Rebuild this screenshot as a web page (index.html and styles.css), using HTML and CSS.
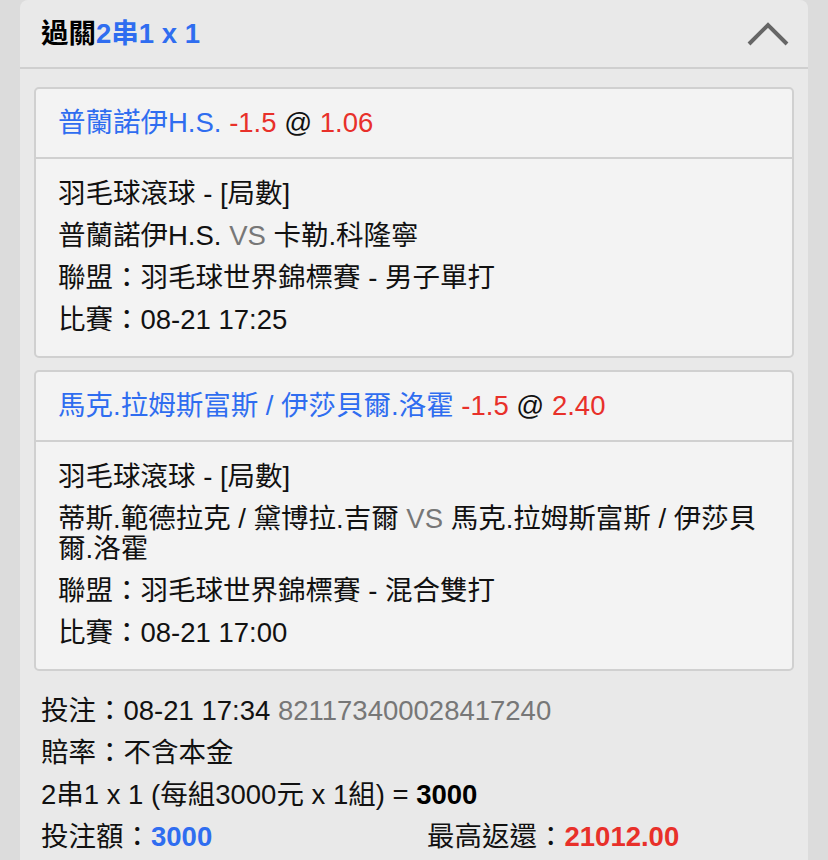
FILE: index.html
```html
<!DOCTYPE html>
<html lang="zh-TW">
<head>
    <meta charset="UTF-8">
    <meta name="viewport" content="width=device-width, initial-scale=1.0">
    <title>過關注單</title>
    <link rel="stylesheet" href="styles.css">
</head>
<body>
    <div class="panel">
        <div class="panel-head">
            <div class="title">過關<span class="blue">2串1 x 1</span></div>
            <svg class="chevron" width="44" height="26" viewBox="0 0 44 26">
                <polyline points="3,23 22,4 41,23" fill="none" stroke="#666" stroke-width="4"/>
            </svg>
        </div>

        <div class="panel-body">
            <div class="card">
                <div class="card-head row">
                    <span class="blue">普蘭諾伊H.S.</span> <span class="red">-1.5</span> @ <span class="red">1.06</span>
                </div>
                <div class="card-body">
                    <div class="row">羽毛球滾球 - [局數]</div>
                    <div class="row">普蘭諾伊H.S. <span class="gray">VS</span> 卡勒.科隆寧</div>
                    <div class="row">聯盟：羽毛球世界錦標賽 - 男子單打</div>
                    <div class="row">比賽：08-21 17:25</div>
                </div>
            </div>

            <div class="card">
                <div class="card-head row">
                    <span class="blue">馬克.拉姆斯富斯 / 伊莎貝爾.洛霍</span> <span class="red">-1.5</span> @ <span class="red">2.40</span>
                </div>
                <div class="card-body">
                    <div class="row">羽毛球滾球 - [局數]</div>
                    <div class="row">蒂斯.範德拉克 / 黛博拉.吉爾 <span class="gray">VS</span> 馬克.拉姆斯富斯 / 伊莎貝爾.洛霍</div>
                    <div class="row">聯盟：羽毛球世界錦標賽 - 混合雙打</div>
                    <div class="row">比賽：08-21 17:00</div>
                </div>
            </div>

            <div class="summary">
                <div class="row">投注：08-21 17:34 <span class="gray">821173400028417240</span></div>
                <div class="row">賠率：不含本金</div>
                <div class="row">2串1 x 1 (每組3000元 x 1組) = <b>3000</b></div>
                <div class="row totals">
                    <div>投注額：<b class="blue">3000</b></div>
                    <div>最高返還：<b class="red">21012.00</b></div>
                </div>
            </div>
        </div>
    </div>
</body>
</html>
```

FILE: styles.css
```css
body {
    margin: 0;
    background-color: #dcdcdc;
    font-family: "Liberation Sans", Arial, "Noto Sans CJK TC", sans-serif;
    font-size: 27.5px;
    color: #111;
}
.panel {
    margin: 0 20px;
    background-color: #e9e9e9;
    border-radius: 8px 8px 0 0;
    min-height: 880px;
}
.panel-head {
    height: 67px;
    display: flex;
    align-items: center;
    justify-content: space-between;
    padding: 0 18px 0 21px;
    border-bottom: 2px solid #cfcfcf;
}
.title {
    font-weight: bold;
    color: #000;
    margin-top: -6px;
}
.chevron {
    display: block;
}
.panel-body {
    padding: 18px 14px 0 14px;
}
.card {
    background-color: #f3f3f3;
    border: 2px solid #d0d0d0;
    border-radius: 5px;
    margin-bottom: 12px;
}
.row {
    line-height: 30px;
    padding: 6px 0;
}
.card-head {
    padding: 19px 22px;
    border-bottom: 2px solid #d0d0d0;
}
.card-body {
    padding: 14px 22px 15px 22px;
}
.summary {
    padding: 7px 7px;
}
.totals {
    display: grid;
    grid-template-columns: 386px 1fr;
}
.blue {
    color: #2f6df0;
}
.red {
    color: #e8302a;
}
.gray {
    color: #777;
}
b {
    color: #000;
}
b.blue {
    color: #2f6df0;
}
b.red {
    color: #e8302a;
}
```
